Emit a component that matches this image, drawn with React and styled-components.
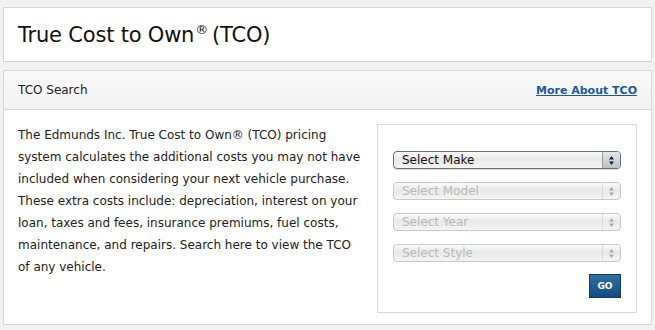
import React from "react";
import styled, { createGlobalStyle } from "styled-components";

const GlobalStyle = createGlobalStyle`
  html, body {
    margin: 0;
    padding: 0;
    background: #f1f1f1;
  }
  body {
    font-family: "DejaVu Sans", Verdana, sans-serif;
    color: #222;
  }
`;

const fields = [
  { label: "Select Make", active: true },
  { label: "Select Model" },
  { label: "Select Year" },
  { label: "Select Style" },
];

const Arrows = ({ active }) => (
  <ArrowBox $active={active}>
    <svg width="7" height="11" viewBox="0 0 7 11">
      <path d="M3.5 1 L6 4.5 L1 4.5 Z" fill={active ? "#222" : "#aaa"} />
      <path d="M3.5 10 L6 6.5 L1 6.5 Z" fill={active ? "#222" : "#aaa"} />
    </svg>
  </ArrowBox>
);

const App = () => {
  return (
    <Page>
      <GlobalStyle />
      <Card>
        <Title>
          True Cost to Own<sup>®</sup> (TCO)
        </Title>
      </Card>
      <Card>
        <Header>
          <span>TCO Search</span>
          <MoreLink href="#">More About TCO</MoreLink>
        </Header>
        <Body>
          <Intro>
            The Edmunds Inc. True Cost to Own® (TCO) pricing system calculates
            the additional costs you may not have included when considering
            your next vehicle purchase. These extra costs include:
            depreciation, interest on your loan, taxes and fees, insurance
            premiums, fuel costs, maintenance, and repairs. Search here to view
            the TCO of any vehicle.
          </Intro>
          <SearchBox>
            {fields.map((f) => (
              <SelectWrap key={f.label} $active={f.active}>
                <Select disabled={!f.active} $active={f.active}>
                  <option>{f.label}</option>
                </Select>
                <Arrows active={f.active} />
              </SelectWrap>
            ))}
            <GoButton>GO</GoButton>
          </SearchBox>
        </Body>
      </Card>
    </Page>
  );
};

const Page = styled.div`
  padding: 7px 3px 3px 3px;
  width: 649px;
  display: flex;
  flex-direction: column;
  gap: 8px;
`;

const Card = styled.div`
  background: #fff;
  border: 1px solid #d6d6d6;
`;

const Title = styled.h1`
  margin: 0;
  height: 53px;
  padding: 0 14px;
  display: flex;
  align-items: center;
  font-size: 21px;
  font-weight: normal;
  color: #111;
  letter-spacing: -0.2px;

  sup {
    font-size: 13px;
    position: relative;
    top: -5px;
    margin-left: 1px;
    margin-right: 4px;
  }
`;

const Header = styled.div`
  height: 38px;
  padding: 0 14px;
  display: flex;
  align-items: center;
  justify-content: space-between;
  font-size: 12px;
  color: #222;
  background: linear-gradient(#f9f9f9, #f2f2f2);
  border-bottom: 1px solid #d6d6d6;
`;

const MoreLink = styled.a`
  font-size: 11px;
  font-weight: bold;
  color: #1a5b9e;
  text-decoration: underline;
`;

const Body = styled.div`
  display: flex;
  justify-content: space-between;
  padding: 14px 14px 11px 14px;
`;

const Intro = styled.p`
  margin: 0;
  width: 344px;
  font-size: 12px;
  line-height: 22px;
  color: #222;
`;

const SearchBox = styled.div`
  width: 228px;
  padding: 26px 15px 14px 15px;
  border: 1px solid #d9d9d9;
  display: flex;
  flex-direction: column;
  gap: 13px;
`;

const SelectWrap = styled.div`
  display: flex;
  height: 16px;
  border: 1px solid ${(p) => (p.$active ? "#6f6f6f" : "#c8c8c8")};
  border-radius: 4px;
  background: linear-gradient(#fbfbfb, #e8e8e8 45%, #f4f4f4);
  overflow: hidden;
  box-shadow: ${(p) => (p.$active ? "0 1px 1px rgba(0,0,0,0.15)" : "none")};
`;

const Select = styled.select`
  flex: 1;
  appearance: none;
  border: none;
  background: transparent;
  padding: 0 8px;
  margin: 0;
  font-family: "DejaVu Sans", Verdana, sans-serif;
  font-size: 12px;
  color: ${(p) => (p.$active ? "#111" : "#a4a4a4")};
  outline: none;
`;

const ArrowBox = styled.span`
  width: 17px;
  display: flex;
  align-items: center;
  justify-content: center;
  border-left: 1px solid ${(p) => (p.$active ? "#9a9a9a" : "#dadada")};
  background: ${(p) =>
    p.$active ? "linear-gradient(#e4e8ee, #b9c2cc)" : "transparent"};
`;

const GoButton = styled.button`
  align-self: flex-end;
  margin-top: -1px;
  width: 32px;
  height: 24px;
  border: 1px solid #0f3e69;
  background: linear-gradient(#2f6fa3, #124c7e);
  color: #fff;
  font-family: "DejaVu Sans", Verdana, sans-serif;
  font-size: 9px;
  font-weight: bold;
  padding: 0;
`;

export default App;
